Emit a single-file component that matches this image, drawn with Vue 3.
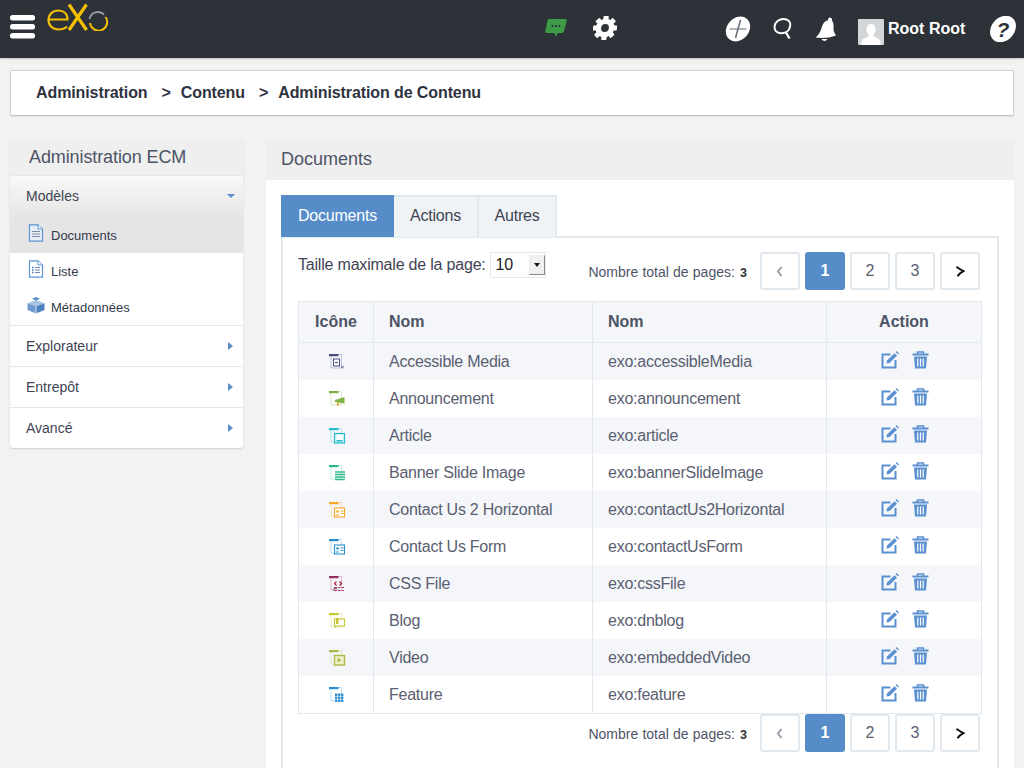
<script setup>
const rows = [
  { name: 'Accessible Media', id: 'exo:accessibleMedia', color: '#4a4a82', kind: 'media' },
  { name: 'Announcement', id: 'exo:announcement', color: '#7cb342', kind: 'horn' },
  { name: 'Article', id: 'exo:article', color: '#26bcd0', kind: 'article' },
  { name: 'Banner Slide Image', id: 'exo:bannerSlideImage', color: '#2fb98a', kind: 'lines' },
  { name: 'Contact Us 2 Horizontal', id: 'exo:contactUs2Horizontal', color: '#f5a623', kind: 'contact' },
  { name: 'Contact Us Form', id: 'exo:contactUsForm', color: '#2a8fd0', kind: 'contact' },
  { name: 'CSS File', id: 'exo:cssFile', color: '#94305f', kind: 'css' },
  { name: 'Blog', id: 'exo:dnblog', color: '#c5c82e', kind: 'blog' },
  { name: 'Video', id: 'exo:embeddedVideo', color: '#b3b84a', kind: 'video' },
  { name: 'Feature', id: 'exo:feature', color: '#2a8fd0', kind: 'grid' }
]
const pages = [
  { label: '1', active: true },
  { label: '2', active: false },
  { label: '3', active: false }
]
const sideGroups = ['Explorateur', 'Entrepôt', 'Avancé']
</script>

<template>
  <div class="page">
    <header class="topbar">
      <svg class="burger" width="26" height="24" viewBox="0 0 26 24">
        <rect x="0" y="0" width="25" height="5.5" rx="2.5" fill="#fff" />
        <rect x="0" y="9" width="25" height="5.5" rx="2.5" fill="#fff" />
        <rect x="0" y="18" width="25" height="5.5" rx="2.5" fill="#fff" />
      </svg>
      <svg class="logo" width="64" height="28" viewBox="0 0 64 28">
        <path d="M2 16.5 H20.5 C20.5 10.5 16.5 7.5 11.5 7.5 C5.5 7.5 1.5 11.5 1.5 17 C1.5 22.5 5.5 26.5 11.5 26.5 C15 26.5 18 25.5 20 23.5" fill="none" stroke="#f5c000" stroke-width="2.2" />
        <path d="M22 1.5 L39.5 27 M39.5 1.5 L22 27" fill="none" stroke="#f5c000" stroke-width="3.2" />
        <path d="M42.5 16 A8.6 8.6 0 0 1 57 11.5" fill="none" stroke="#9a9da3" stroke-width="2" />
        <path d="M58.5 14 A8.6 8.6 0 1 1 43 20" fill="none" stroke="#f5c000" stroke-width="2" />
      </svg>

      <svg class="chat" width="22" height="19" viewBox="0 0 22 19">
        <path d="M4 0 H20 C21.5 0 22 1 21.6 2.5 L19 12 C18.6 13.4 17.6 14 16.5 14 H13 L10.5 18 L9.5 14 H2 C0.6 14 0 13 0.4 11.5 L2.4 2 C2.7 0.7 3 0 4 0 Z" fill="#3d9b47" />
        <circle cx="7.5" cy="7" r="1.1" fill="#2d3138" />
        <circle cx="11" cy="7" r="1.1" fill="#2d3138" />
        <circle cx="14.5" cy="7" r="1.1" fill="#2d3138" />
      </svg>
      <svg class="gear" width="24" height="24" viewBox="0 0 24 24">
        <g transform="translate(12 12) skewX(-6)">
          <circle r="6.6" fill="none" stroke="#fff" stroke-width="5.4" />
          <g fill="#fff">
            <rect v-for="a in [0, 45, 90, 135, 180, 225, 270, 315]" :key="a" x="-2.6" y="-12" width="5.2" height="5" rx="0.8" :transform="`rotate(${a})`" />
          </g>
        </g>
      </svg>

      <svg class="plus" width="26" height="26" viewBox="0 0 26 26">
        <ellipse cx="13" cy="13" rx="13.5" ry="11" transform="rotate(-48 13 13)" fill="#fff" />
        <path d="M4.5 13 H21.5" stroke="#9aa0a8" stroke-width="1.6" />
        <path d="M15.5 4 L10.5 22" stroke="#6b7280" stroke-width="1.6" />
      </svg>
      <svg class="search" width="20" height="23" viewBox="0 0 20 23">
        <path d="M10.5 2 C15 2 18 4.6 17.2 9 C16.4 13.8 12.5 16.5 8 16.3 C3.5 16.1 1 13.2 1.6 9 C2.2 5 6 2 10.5 2 Z" fill="none" stroke="#fff" stroke-width="2" />
        <path d="M13 15.5 L16.5 21.5" stroke="#fff" stroke-width="2.2" />
      </svg>
      <svg class="bell" width="22" height="25" viewBox="0 0 22 25">
        <path d="M15 0.5 C17 0.7 17.3 2.5 17 3.5 C19 6 18.5 9 18.5 12 C18.5 15 20 17 21 18.5 C14.5 21 7 21.5 0.5 20.5 C3 18.5 4.5 16.5 6 12.5 C7.5 8 8.8 4 13 3.2 C13 1.5 13.8 0.5 15 0.5 Z" fill="#fff" />
        <path d="M6.5 22 C8 24.5 11 24.5 12.5 22 Z" fill="#fff" />
      </svg>
      <div class="avatar">
        <svg width="26" height="26" viewBox="0 0 26 26">
          <rect width="26" height="26" rx="1" fill="#d3d6d9" />
          <path d="M13 5 C16 5 17.5 7.2 17.5 10.5 C17.5 13 16.5 15 15.5 16 V17.5 C18 18.8 21.5 19.5 22.5 22 V26 H3.5 V22 C4.5 19.5 8 18.8 10.5 17.5 V16 C9.5 15 8.5 13 8.5 10.5 C8.5 7.2 10 5 13 5 Z" fill="#fff" />
        </svg>
      </div>
      <span class="username">Root Root</span>
      <svg class="help" width="28" height="26" viewBox="0 0 28 26">
        <ellipse cx="14" cy="13" rx="14.5" ry="11.5" transform="rotate(-48 14 13)" fill="#fff" />
        <text x="14" y="21" text-anchor="middle" class="help-mark">?</text>
      </svg>
    </header>

    <nav class="crumbs">
      <span>Administration</span>
      <span class="sep">&gt;</span>
      <span>Contenu</span>
      <span class="sep">&gt;</span>
      <span>Administration de Contenu</span>
    </nav>

    <div class="columns">
      <aside class="side">
        <div class="side-title">Administration ECM</div>
        <div class="side-open">
          <span>Modèles</span>
          <i class="caret-down"></i>
        </div>
        <div class="side-sub active">
          <svg width="18" height="18" viewBox="0 0 18 18">
            <path d="M2.5 0.8 H11 L15.5 5 V17.2 H2.5 Z" fill="#e8eef6" stroke="#5b93d3" stroke-width="1.2" />
            <path d="M11 0.8 V5 H15.5" fill="#fff" stroke="#5b93d3" stroke-width="1" />
            <path d="M5 7.5 H13 M5 10 H13 M5 12.5 H13" stroke="#7d8ea8" stroke-width="1.2" />
          </svg>
          <span>Documents</span>
        </div>
        <div class="side-sub">
          <svg width="18" height="18" viewBox="0 0 18 18">
            <path d="M2.5 0.8 H11 L15.5 5 V17.2 H2.5 Z" fill="#fff" stroke="#5b93d3" stroke-width="1.2" />
            <path d="M11 0.8 V5 H15.5" fill="#fff" stroke="#5b93d3" stroke-width="1" />
            <path d="M5 7.5 H6.5 M5 10 H6.5 M5 12.5 H6.5" stroke="#3d78c2" stroke-width="1.3" />
            <path d="M8 7.5 H13 M8 10 H13 M8 12.5 H13" stroke="#6f86a8" stroke-width="1.2" />
          </svg>
          <span>Liste</span>
        </div>
        <div class="side-sub">
          <svg width="18" height="18" viewBox="0 0 18 18">
            <path d="M9 4.5 L17.5 7.5 V14 L9 17.5 Z" fill="#4d81bd" />
            <path d="M9 4.5 L0.5 7.5 V14 L9 17.5 Z" fill="#6d9ad0" />
            <path d="M9 4.5 L17.5 7.5 L9 10.5 L0.5 7.5 Z" fill="#a5c2e3" />
            <path d="M9 1 L13 2.8 L9 4.8 L5 2.8 Z" fill="#5b8cc6" />
            <path d="M9 10.5 V17.5" stroke="#fff" stroke-width="0.8" />
          </svg>
          <span>Métadonnées</span>
        </div>
        <div v-for="g in sideGroups" :key="g" class="side-group">
          <span>{{ g }}</span>
          <i class="caret-right"></i>
        </div>
      </aside>

      <main class="main">
        <div class="main-title">Documents</div>
        <div class="main-body">
          <div class="tabs">
            <div class="tab current">Documents</div>
            <div class="tab">Actions</div>
            <div class="tab">Autres</div>
          </div>
          <div class="panel">
            <div class="toolbar">
              <div class="size">
                <span>Taille maximale de la page:</span>
                <div class="select">
                  <span>10</span>
                  <i class="select-btn"><b></b></i>
                </div>
              </div>
              <div class="pager">
                <span class="total">Nombre total de pages: <b>3</b></span>
                <div class="pg">
                  <svg width="8" height="11" viewBox="0 0 8 11"><path d="M5.5 1 L2 5.5 L5.5 10" fill="none" stroke="#9aa0a8" stroke-width="2" /></svg>
                </div>
                <div v-for="p in pages" :key="p.label" class="pg" :class="{ on: p.active }">{{ p.label }}</div>
                <div class="pg">
                  <svg width="10" height="11" viewBox="0 0 10 11"><path d="M1.5 0.8 C4 2.5 6 4 8.5 5.2 C6 6.5 4 8 2.5 10.2" fill="none" stroke="#111" stroke-width="2" /></svg>
                </div>
              </div>
            </div>

            <table class="grid">
              <colgroup>
                <col class="c1" /><col class="c2" /><col class="c3" /><col class="c4" />
              </colgroup>
              <thead>
                <tr>
                  <th class="center">Icône</th>
                  <th>Nom</th>
                  <th>Nom</th>
                  <th class="center">Action</th>
                </tr>
              </thead>
              <tbody>
                <tr v-for="r in rows" :key="r.id">
                  <td class="center">
                    <svg class="doc" width="17" height="17" viewBox="0 0 17 17">
                      <path d="M2 1.5 H12.5 V15 H2 Z" fill="none" :stroke="r.color" stroke-opacity=".3" stroke-width="1" />
                      <rect x="0" y="1" width="9.5" height="2.2" :fill="r.color" />
                      <g v-if="r.kind === 'media'">
                        <rect x="4.5" y="6" width="6" height="7" fill="#fff" :stroke="r.color" stroke-width="1" />
                        <path d="M6 9.5 H9" :stroke="r.color" stroke-width="1" />
                        <circle cx="13.5" cy="14" r="1.6" :fill="r.color" fill-opacity=".5" />
                      </g>
                      <g v-else-if="r.kind === 'horn'">
                        <path d="M6 10 L15.5 7 V13.5 L6 12 Z" :fill="r.color" />
                        <rect x="8" y="12.5" width="2" height="3" fill="#d9a92a" />
                      </g>
                      <g v-else-if="r.kind === 'article'">
                        <rect x="5.5" y="6.5" width="10" height="9.5" fill="#d5f3f7" :stroke="r.color" stroke-width="1.2" />
                        <rect x="7.5" y="8" width="6" height="5" fill="#fff" />
                        <rect x="7.5" y="13" width="6" height="1.5" :fill="r.color" />
                      </g>
                      <g v-else-if="r.kind === 'lines'">
                        <path d="M6 8 H16 M6 10.5 H16 M6 13 H16 M6 15.5 H16" :stroke="r.color" stroke-width="1.4" />
                      </g>
                      <g v-else-if="r.kind === 'contact'">
                        <rect x="5.5" y="7" width="10" height="9" fill="#fff" :stroke="r.color" stroke-width="1.1" />
                        <circle cx="8.5" cy="10.5" r="1.3" :fill="r.color" />
                        <path d="M6.8 14 H10.2 M11.5 10 H14.5 M11.5 12.5 H14.5" :stroke="r.color" stroke-width="1" />
                      </g>
                      <g v-else-if="r.kind === 'css'">
                        <path d="M7.5 6.5 L5.5 8.5 L7.5 10.5 M10.5 6.5 L12.5 8.5 L10.5 10.5" fill="none" stroke="#b0203f" stroke-width="1.2" />
                        <path d="M5 12.5 H8 V13.4 H5 V15.6 H8 M9 12.5 H11.5 M9 15.6 H11.5 M12.5 12.5 H15 M12.5 15.6 H15" fill="none" :stroke="r.color" stroke-width=".9" />
                      </g>
                      <g v-else-if="r.kind === 'blog'">
                        <rect x="5.5" y="7" width="10" height="7" fill="#fff" :stroke="r.color" stroke-width="1.1" />
                        <rect x="7" y="6" width="2.5" height="6" :fill="r.color" />
                        <path d="M7 14 L6 16" :stroke="r.color" stroke-width="1" />
                      </g>
                      <g v-else-if="r.kind === 'video'">
                        <rect x="5.5" y="6.5" width="10" height="9.5" fill="#eef0cc" :stroke="r.color" stroke-width="1.4" />
                        <path d="M8.5 8.8 L12.5 11.2 L8.5 13.6 Z" :fill="r.color" />
                      </g>
                      <g v-else>
                        <g :fill="r.color">
                          <template v-for="y in [7.5, 10.5, 13.5]" :key="y">
                            <rect v-for="x in [6, 9, 12]" :key="x" :x="x" :y="y" width="2.4" height="2.4" />
                          </template>
                        </g>
                      </g>
                    </svg>
                  </td>
                  <td>{{ r.name }}</td>
                  <td>{{ r.id }}</td>
                  <td class="center">
                    <div class="acts">
                      <svg width="18" height="18" viewBox="0 0 18 18">
                        <path d="M9.5 3.5 H1.5 V16.5 H14.5 V9" fill="none" stroke="#5b90d0" stroke-width="2" />
                        <path d="M5.5 12.5 L6 9.5 L13.5 2.2 L16 4.7 L8.5 12 Z" fill="#5b90d0" />
                        <path d="M14.5 1 L15.5 0 L18 2.5 L17 3.5 Z" fill="#5b90d0" />
                      </svg>
                      <svg width="17" height="18" viewBox="0 0 17 18">
                        <path d="M0.5 3.5 H16.5" stroke="#5b90d0" stroke-width="2" />
                        <path d="M5.5 3 V1 H11.5 V3" fill="none" stroke="#5b90d0" stroke-width="1.6" />
                        <path d="M2 5.5 H15 L14 17.5 H3 Z" fill="#5b90d0" />
                        <path d="M5.8 7.5 V15.5 M8.5 7.5 V15.5 M11.2 7.5 V15.5" stroke="#fff" stroke-width="1.2" />
                      </svg>
                    </div>
                  </td>
                </tr>
              </tbody>
            </table>

            <div class="pager bottom">
              <span class="total">Nombre total de pages: <b>3</b></span>
              <div class="pg">
                <svg width="8" height="11" viewBox="0 0 8 11"><path d="M5.5 1 L2 5.5 L5.5 10" fill="none" stroke="#9aa0a8" stroke-width="2" /></svg>
              </div>
              <div v-for="p in pages" :key="p.label" class="pg" :class="{ on: p.active }">{{ p.label }}</div>
              <div class="pg">
                <svg width="10" height="11" viewBox="0 0 10 11"><path d="M1.5 0.8 C4 2.5 6 4 8.5 5.2 C6 6.5 4 8 2.5 10.2" fill="none" stroke="#111" stroke-width="2" /></svg>
              </div>
            </div>
          </div>
        </div>
      </main>
    </div>
  </div>
</template>

<style>
html, body { margin: 0; background: #f2f2f2; overflow: hidden; }
</style>

<style scoped>
.page {
  width: 1024px;
  height: 768px;
  overflow: hidden;
  background: #f2f2f2;
  font-family: "Liberation Sans", Arial, sans-serif;
  color: #4d5466;
}
.topbar {
  height: 58px;
  background: #2d3138;
  display: flex;
  align-items: flex-start;
  box-shadow: 0 1px 2px rgba(0, 0, 0, .2);
}
.topbar svg { flex: none; display: block; }
.burger { margin: 15px 0 0 10px; }
.logo { margin: 3px 0 0 11px; }
.chat { margin: 19px 0 0 434px; }
.gear { margin: 16px 0 0 26px; }
.plus { margin: 16px 0 0 108px; }
.search { margin: 17px 0 0 22px; }
.bell { margin: 17px 0 0 22px; }
.avatar { margin: 19px 0 0 21px; height: 26px; }
.username {
  margin: 19px 0 0 4px;
  font-size: 16px;
  line-height: 19px;
  font-weight: 700;
  color: #fff;
  white-space: nowrap;
  flex: none;
}
.help { margin: 16px 0 0 24px; }
.help-mark {
  font-family: "Liberation Sans", Arial, sans-serif;
  font-size: 21px;
  font-weight: 700;
  font-style: italic;
  fill: #2d3138;
}

.crumbs {
  margin: 12px 10px 0;
  height: 46px;
  box-sizing: border-box;
  border: 1px solid #d0d0d0;
  border-bottom-color: #c4c4c4;
  border-radius: 2px;
  background: #fff;
  padding-left: 25px;
  display: flex;
  align-items: center;
  font-size: 16px;
  letter-spacing: -0.1px;
  font-weight: 700;
  color: #2f3340;
  box-shadow: 0 1px 1px rgba(0, 0, 0, .06);
}
.sep { margin: 0 10px 0 14px; }

.columns {
  display: flex;
  align-items: flex-start;
  gap: 23px;
  margin: 24px 10px 0;
}
.side {
  width: 233px;
  flex: none;
  background: #fff;
  border-radius: 3px;
  box-shadow: 0 1px 2px rgba(120, 140, 170, .35);
}
.side-title {
  height: 35px;
  padding-left: 19px;
  background: #efefef;
  border-bottom: 1px solid #e1e8ee;
  font-size: 18px;
  letter-spacing: -0.1px;
  line-height: 35px;
  color: #4d5466;
}
.side-open {
  height: 41px;
  padding: 0 8px 2px 16px;
  display: flex;
  align-items: center;
  justify-content: space-between;
  box-sizing: border-box;
  font-size: 14px;
  color: #3f4454;
  background: linear-gradient(#f8f8f8, #e6e6e6);
}
.caret-down {
  width: 0;
  height: 0;
  border-left: 4px solid transparent;
  border-right: 4px solid transparent;
  border-top: 4px solid #5b8ec9;
}
.side-sub {
  height: 36px;
  padding-left: 17px;
  display: flex;
  align-items: center;
  gap: 6px;
  font-size: 13px;
  color: #333a4d;
}
.side-sub svg { flex: none; margin-bottom: 4px; }
.side-sub.active { background: #e5e5e5; }
.side-group {
  height: 41px;
  box-sizing: border-box;
  border-top: 1px solid #e1e8ee;
  padding: 0 10px 1px 16px;
  display: flex;
  align-items: center;
  justify-content: space-between;
  font-size: 14px;
  color: #3f4454;
}
.caret-right {
  width: 0;
  height: 0;
  border-top: 4px solid transparent;
  border-bottom: 4px solid transparent;
  border-left: 5px solid #5b8ec9;
}

.main { flex: 1; min-width: 0; }
.main-title {
  height: 40px;
  padding-left: 15px;
  background: #efefef;
  font-size: 18px;
  line-height: 39px;
  color: #4d5466;
}
.main-body {
  background: #fff;
  padding: 15px 15px 30px;
  height: 600px;
}
.tabs { display: flex; align-items: flex-end; height: 42px; }
.tab {
  box-sizing: border-box;
  height: 42px;
  padding: 0 15px;
  border: 2px solid #e1e8ee;
  border-right-width: 2px;
  border-left-width: 0;
  border-bottom-width: 0;
  background: #eff3f6;
  font-size: 16px;
  letter-spacing: -0.2px;
  line-height: 38px;
  color: #3f4454;
}
.tab.current {
  width: 113px;
  padding: 0;
  text-align: center;
  background: #568dc9;
  border: 0;
  line-height: 42px;
  color: #fff;
}
.tab:nth-child(2) { width: 85px; padding: 0; text-align: center; }
.tab:nth-child(3) { width: 78px; padding: 0; text-align: center; }
.panel {
  border: 2px solid #e1e8ee;
  margin-top: -1px;
  padding: 14px 15px 0;
  height: 560px;
  box-sizing: border-box;
}
.toolbar {
  display: flex;
  justify-content: space-between;
  align-items: flex-start;
  padding-right: 2px;
}
.size {
  display: flex;
  align-items: center;
  gap: 4px;
  height: 26px;
  font-size: 16px;
  letter-spacing: -0.2px;
  color: #3f4454;
}
.select {
  width: 56px;
  height: 26px;
  box-sizing: border-box;
  border: 1px solid #e1e8ee;
  background: #fff;
  display: flex;
  align-items: center;
  justify-content: space-between;
  padding: 0 0 0 5px;
  color: #222;
}
.select-btn {
  width: 16px;
  height: 20px;
  box-sizing: border-box;
  border: 1px solid #888;
  border-top-color: #eee;
  border-left-color: #eee;
  background: #f0f0f0;
  display: flex;
  align-items: center;
  justify-content: center;
}
.select-btn b {
  width: 0;
  height: 0;
  border-left: 3.5px solid transparent;
  border-right: 3.5px solid transparent;
  border-top: 4px solid #111;
}
.pager { display: flex; align-items: center; gap: 5px; height: 38px; }
.pager.bottom { justify-content: flex-end; padding-right: 2px; }
.total {
  margin-right: 8px;
  font-size: 14px;
  color: #4d5466;
  margin-top: 1px;
  word-spacing: .3px;
}
.total b { color: #333; font-size: 12.5px; margin-left: 1px; }
.pg {
  width: 40px;
  height: 38px;
  box-sizing: border-box;
  border: 2px solid #e1e8ee;
  border-radius: 3px;
  background: #fff;
  display: flex;
  align-items: center;
  justify-content: center;
  font-size: 16px;
  color: #5a6070;
}
.pg.on {
  background: #568dc9;
  border-color: #568dc9;
  color: #fff;
  font-weight: 700;
}
.grid {
  table-layout: fixed;
  width: 683px;
  margin-top: 11px;
  border-collapse: collapse;
  font-size: 16px;
}
.c1 { width: 75px; }
.c2 { width: 219px; }
.c3 { width: 234px; }
.c4 { width: 155px; }
.grid th, .grid td {
  border: 1px solid #e1e8ee;
  padding: 0 15px;
  text-align: left;
}
.grid th {
  height: 40px;
  background: #f4f6fa;
  font-weight: 700;
  color: #4d5466;
}
.grid td {
  height: 37px;
  border-top: 0;
  border-bottom: 0;
  color: #5a6070;
  letter-spacing: -0.25px;
}
.grid tbody tr:last-child td { border-bottom: 1px solid #e1e8ee; }
.grid tbody tr:nth-child(odd) td { background: #f4f6fa; }
.grid .center { text-align: center; padding: 0; }
.doc { display: inline-block; vertical-align: middle; margin: 0 0 1px 2px; }
.acts {
  display: flex;
  justify-content: center;
  gap: 13px;
  padding: 0 0 3px 1px;
}
</style>
